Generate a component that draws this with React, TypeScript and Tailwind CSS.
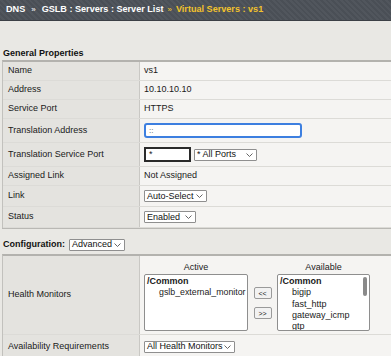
import React from "react";

const Chevron = () => (
  <svg width="7" height="4" viewBox="0 0 7 4" className="shrink-0">
    <path d="M0.5 0.5 L3.5 3.5 L6.5 0.5" fill="none" stroke="#555" strokeWidth="0.9" />
  </svg>
);

const Select = ({ label, w }: { label: string; w: string }) => (
  <div
    className={`${w} h-[12px] flex items-center justify-between bg-white border border-[#8f8f8f] rounded-[1px] pl-[2px] pr-[3px] text-[9px] leading-none text-[#111] whitespace-nowrap`}
  >
    <span>{label}</span>
    <Chevron />
  </div>
);

const Row = ({
  label,
  h,
  children,
}: {
  label: string;
  h: string;
  children: React.ReactNode;
}) => (
  <div className={`flex ${h} border-b border-[#dcdbd7]`}>
    <div className="w-[137px] shrink-0 bg-[#e4e3df] border-r border-[#c9c8c4] flex items-center pl-[5px] text-[9px] text-[#1a1a1a]">
      {label}
    </div>
    <div className="flex-1 bg-[#f5f4f2] flex items-center pl-[4px] text-[9px] text-[#1a1a1a]">
      {children}
    </div>
  </div>
);

export default function App() {
  return (
    <div
      className="w-[391px] h-[356px] overflow-hidden bg-[#e9e8e4]"
      style={{ fontFamily: '"Liberation Sans", Arial, sans-serif' }}
    >
      {/* header */}
      <div className="h-[21px] flex items-center pl-[6px] text-[9.1px] font-bold text-white bg-[repeating-linear-gradient(45deg,#4a4f56_0px,#4a4f56_2px,#51565d_2px,#51565d_4px)] border-b border-[#3c4046]">
        <span>DNS</span>
        <span className="mx-[6px] text-[8px] font-normal">»</span>
        <span>GSLB : Servers : Server List</span>
        <span className="mx-[4px] text-[8px] font-normal text-[#f3c32c]">»</span>
        <span className="text-[#f3c32c]">Virtual Servers : vs1</span>
      </div>

      <div className="mt-[27px] pl-[3px] text-[9px] font-bold text-[#111] leading-[11px]">
        General Properties
      </div>

      {/* general table */}
      <div className="mt-[1px] ml-[2px] border-t-2 border-[#b3b2ae] border-l border-l-[#c2c1bd]">
        <Row label="Name" h="h-[19px]">vs1</Row>
        <Row label="Address" h="h-[19px]">10.10.10.10</Row>
        <Row label="Service Port" h="h-[19px]">HTTPS</Row>
        <Row label="Translation Address" h="h-[24px]">
          <div className="w-[158px] h-[15px] bg-white border-2 border-[#3d7fe0] rounded-[3px] flex items-center pl-[3px] text-[8px] text-[#444]">
            ::
          </div>
        </Row>
        <Row label="Translation Service Port" h="h-[24px]">
          <div className="w-[47px] h-[15px] bg-white border-2 border-[#2a2a2a] flex items-center pl-[3px] text-[9px]">
            *
          </div>
          <div className="ml-[3px]">
            <Select label="* All Ports" w="w-[63px]" />
          </div>
        </Row>
        <Row label="Assigned Link" h="h-[19px]">Not Assigned</Row>
        <Row label="Link" h="h-[21px]">
          <Select label="Auto-Select" w="w-[63px]" />
        </Row>
        <Row label="Status" h="h-[21px]">
          <Select label="Enabled" w="w-[52px]" />
        </Row>
      </div>
      <div className="ml-[2px] h-[1px] bg-[#b9b8b4]" />

      {/* configuration */}
      <div className="h-[25px] flex items-center pl-[3px] pt-[6px]">
        <span className="text-[9px] font-bold text-[#111] mr-[4px]">Configuration:</span>
        <Select label="Advanced" w="w-[56px]" />
      </div>

      {/* health table */}
      <div className="ml-[2px] border-t-2 border-[#b3b2ae] border-l border-l-[#c2c1bd]">
        <div className="flex h-[79px] border-b border-[#dcdbd7]">
          <div className="w-[137px] shrink-0 bg-[#e4e3df] border-r border-[#c9c8c4] flex items-center pl-[5px] text-[9px] text-[#1a1a1a]">
            Health Monitors
          </div>
          <div className="flex-1 bg-[#f5f4f2] pl-[4px] pt-[6px] text-[9px] text-[#1a1a1a]">
            <div className="flex">
              <div className="w-[104px] text-center leading-[11px]">Active</div>
              <div className="w-[29px]" />
              <div className="w-[93px] text-center leading-[11px]">Available</div>
            </div>
            <div className="flex mt-[1px]">
              <div className="w-[104px] h-[57px] bg-white border border-[#8e8e8e] rounded-[2px] pl-[2px] pt-[1px] leading-[11px] overflow-hidden whitespace-nowrap">
                <div className="font-bold">/Common</div>
                <div className="pl-[12px] text-[8.8px]">gslb_external_monitor</div>
              </div>
              <div className="w-[29px] flex flex-col items-center pt-[13px] gap-[8px]">
                <div className="w-[18px] h-[12px] bg-[#f2f2f2] border border-[#9a9a9a] rounded-[2px] flex items-center justify-center text-[7px] leading-none">
                  &lt;&lt;
                </div>
                <div className="w-[18px] h-[12px] bg-[#f2f2f2] border border-[#9a9a9a] rounded-[2px] flex items-center justify-center text-[7px] leading-none">
                  &gt;&gt;
                </div>
              </div>
              <div className="relative w-[93px] h-[57px] bg-white border border-[#8e8e8e] rounded-[2px] pl-[2px] pt-[1px] leading-[11.3px] overflow-hidden whitespace-nowrap">
                <div className="font-bold">/Common</div>
                <div className="pl-[12px]">bigip</div>
                <div className="pl-[12px]">fast_http</div>
                <div className="pl-[12px]">gateway_icmp</div>
                <div className="pl-[12px]">gtp</div>
                <div className="absolute right-[2px] top-[2px] w-[4px] h-[19px] rounded-full bg-[#8a8a8a]" />
              </div>
            </div>
          </div>
        </div>
        <div className="flex h-[23px]">
          <div className="w-[137px] shrink-0 bg-[#e4e3df] border-r border-[#c9c8c4] flex items-center pl-[5px] text-[9px] text-[#1a1a1a]">
            Availability Requirements
          </div>
          <div className="flex-1 bg-[#f5f4f2] flex items-center pl-[4px]">
            <Select label="All Health Monitors" w="w-[91px]" />
          </div>
        </div>
      </div>
    </div>
  );
}
